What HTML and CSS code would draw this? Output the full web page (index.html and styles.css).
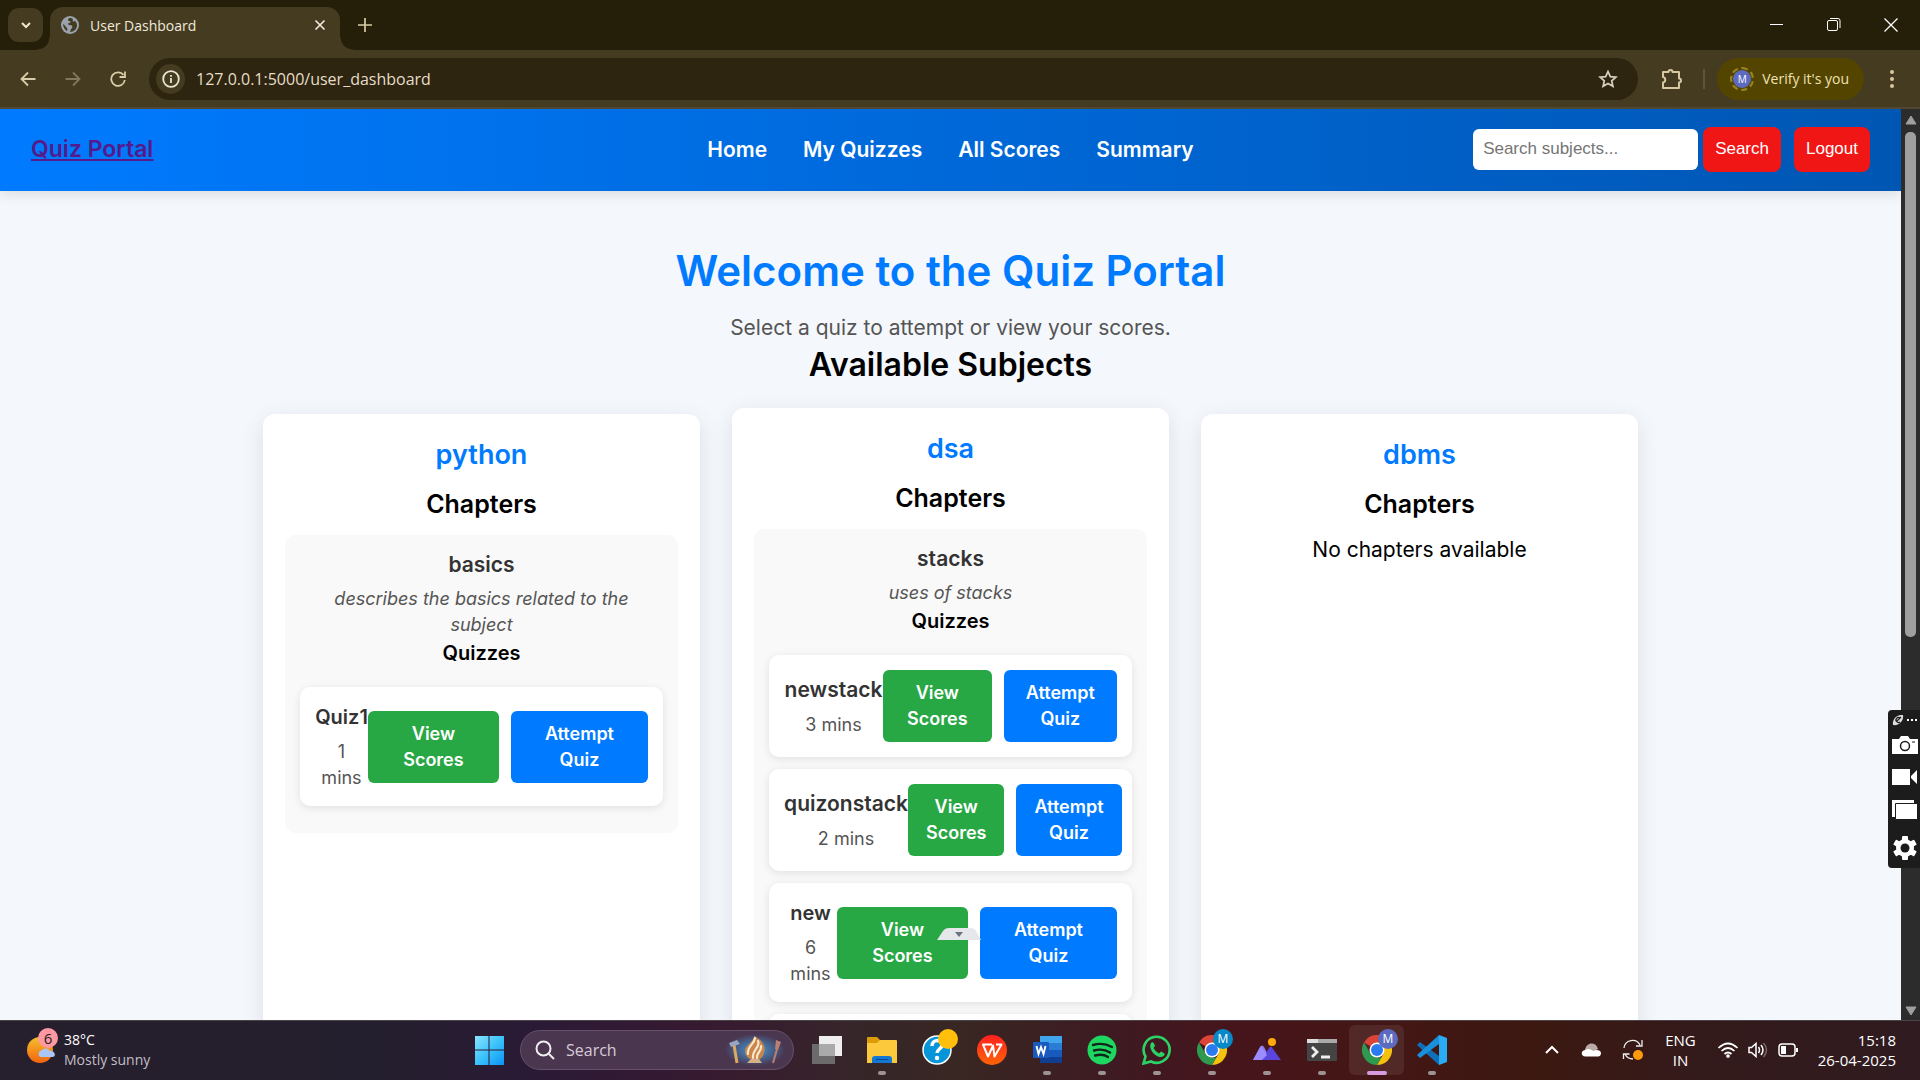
FILE: index.html
```html
<!DOCTYPE html>
<html lang="en">
<head>
  <meta charset="UTF-8" />
  <meta name="viewport" content="width=device-width, initial-scale=1.0" />
  <title>User Dashboard</title>
  <link rel="stylesheet" href="styles.css">
</head>
<body>
  <!-- shared icons -->
  <svg class="defs" width="0" height="0" aria-hidden="true">
    <symbol id="chrome" viewBox="0 0 30 30">
      <path fill="#db4437" d="M15 15 2 7.500A15 15 0 0 1 28 7.500H15z"/>
      <path fill="#f4c20d" d="M15 7.500H28A15 15 0 0 1 15 30l6.500-11.250z"/>
      <path fill="#2e9a4f" d="M2 7.500 8.500 18.750 15 22.500h4.300L15 30A15 15 0 0 1 2 7.500z"/>
      <circle cx="15" cy="15" r="7.500" fill="#fff"/>
      <circle cx="15" cy="15" r="6" fill="#2a7bf0"/>
    </symbol>
  </svg>

  <div class="tabstrip">
    <button class="tab-search" aria-label="Search tabs">
      <svg width="12" height="12" viewBox="0 0 12 12"><path d="M2 4l4 4 4-4" fill="none" stroke="#efe6cd" stroke-width="2"/></svg>
    </button>
    <div class="tab">
      <svg width="18" height="20" viewBox="0 0 18 18"><circle cx="9" cy="9" r="9" fill="#9aa3ad"/><path d="M10 2C7 2 6 4 8 5c2 0 2 2 0 2-2 1-1 2 1 2 3 0 3 3 1 4l-1 3c4 0 7-3 7-7 0-2-1-3-2-4-2 1-3 0-2-2zM2 8c0 3 2 6 4 7 1-2 0-3-1-4s-1-2-3-3z" fill="#443b21"/></svg>
      <span>User Dashboard</span>
      <button class="icon-btn" aria-label="Close tab">
        <svg width="12" height="12" viewBox="0 0 12 12"><path d="M1.500 1.500l9 9M10.500 1.500l-9 9" stroke="#efe9dc" stroke-width="1.700"/></svg>
      </button>
    </div>
    <button class="icon-btn new-tab" aria-label="New tab">
      <svg width="14" height="14" viewBox="0 0 14 14"><path d="M7 0v14M0 7h14" stroke="#d9cda4" stroke-width="1.700"/></svg>
    </button>
    <div class="window-buttons">
      <button class="icon-btn" aria-label="Minimize"><svg width="14" height="14" viewBox="0 0 14 14"><path d="M0 6.500h13" stroke="#fff"/></svg></button>
      <button class="icon-btn" aria-label="Restore"><svg width="14" height="14" viewBox="0 0 14 14" fill="none" stroke="#fff"><rect x=".5" y="2.500" width="10" height="10" rx="1.500"/><path d="M3 .5h8a2 2 0 0 1 2 2V10"/></svg></button>
      <button class="icon-btn" aria-label="Close"><svg width="14" height="14" viewBox="0 0 14 14"><path d="M.5.5l13 13M13.500.5l-13 13" stroke="#fff" stroke-width="1.300"/></svg></button>
    </div>
  </div>

  <div class="toolbar">
    <div class="nav-buttons">
      <button class="icon-btn" aria-label="Back"><svg width="16" height="16" viewBox="0 0 16 16" fill="none" stroke="#d8cda6" stroke-width="1.800"><path d="M15.500 8H2M8 1.500 1.500 8 8 14.500"/></svg></button>
      <button class="icon-btn" aria-label="Forward"><svg width="16" height="16" viewBox="0 0 16 16" fill="none" stroke="#81785d" stroke-width="1.800"><path d="M.5 8H14M8 1.500 14.500 8 8 14.500"/></svg></button>
      <button class="icon-btn" aria-label="Reload"><svg width="16" height="16" viewBox="0 0 16 16" fill="none" stroke="#d8cda6" stroke-width="1.800"><path d="M13.500 4A6.800 6.800 0 1 0 14.800 9M15 .5V6H9.500"/></svg></button>
    </div>
    <div class="address">
      <span class="site-info"><svg width="18" height="18" viewBox="0 0 18 18"><circle cx="9" cy="9" r="7.800" fill="none" stroke="#ece5d2" stroke-width="1.800"/><path d="M9 8v5M9 5v1.700" stroke="#ece5d2" stroke-width="1.800"/></svg></span>
      <input type="text" value="127.0.0.1:5000/user_dashboard" aria-label="Address">
      <button class="icon-btn" aria-label="Bookmark"><svg width="20" height="20" viewBox="0 0 20 20"><path d="M10 2.500l2.300 5.100 5.600.5-4.200 3.700 1.200 5.500L10 14.400l-4.900 2.900 1.200-5.500L2.100 8.100l5.600-.5z" fill="none" stroke="#d9cfc0" stroke-width="1.700"/></svg></button>
    </div>
    <button class="icon-btn extensions" aria-label="Extensions"><svg width="22" height="22" viewBox="0 0 22 22"><path d="M2 4h5.500a2 2 0 0 1 4 0H18v6.500a2 2 0 0 1 0 4V20H2v-5.500a2.800 2.800 0 0 0 0-5.500z" fill="none" stroke="#d8c8a0" stroke-width="2" stroke-linejoin="round"/></svg></button>
    <span class="divider"></span>
    <button class="verify"><span class="avatar">M</span>Verify it's you</button>
    <button class="icon-btn" aria-label="Menu"><svg width="4" height="18" viewBox="0 0 4 18" fill="#d8c8a0"><circle cx="2" cy="2" r="2"/><circle cx="2" cy="9" r="2"/><circle cx="2" cy="16" r="2"/></svg></button>
  </div>

  <div class="viewport">
    <div class="page">
      <header class="navbar">
        <a href="#" class="logo">Quiz Portal</a>
        <nav>
          <a href="#">Home</a>
          <a href="#">My Quizzes</a>
          <a href="#">All Scores</a>
          <a href="#">Summary</a>
        </nav>
        <form class="search-form" onsubmit="return false">
          <input type="text" placeholder="Search subjects..." aria-label="Search subjects">
          <button class="btn-red">Search</button>
          <button type="button" class="btn-red logout">Logout</button>
        </form>
      </header>

      <main>
        <h1>Welcome to the Quiz Portal</h1>
        <p class="intro">Select a quiz to attempt or view your scores.</p>
        <h2>Available Subjects</h2>

        <div class="subjects">
          <section class="subject">
            <h3>python</h3>
            <h4>Chapters</h4>
            <div class="chapter">
              <h5>basics</h5>
              <p class="description">describes the basics related to the subject</p>
              <h6>Quizzes</h6>
              <div class="quiz short">
                <div class="quiz-info"><strong>Quiz1</strong><p>1 mins</p></div>
                <div class="actions"><button class="view">View Scores</button><button class="attempt">Attempt Quiz</button></div>
              </div>
            </div>
          </section>

          <section class="subject hovered">
            <h3>dsa</h3>
            <h4>Chapters</h4>
            <div class="chapter">
              <h5>stacks</h5>
              <p class="description">uses of stacks</p>
              <h6>Quizzes</h6>
              <div class="quiz">
                <div class="quiz-info"><strong>newstack</strong><p>3 mins</p></div>
                <div class="actions"><button class="view">View Scores</button><button class="attempt">Attempt Quiz</button></div>
              </div>
              <div class="quiz long">
                <div class="quiz-info"><strong>quizonstack</strong><p>2 mins</p></div>
                <div class="actions"><button class="view">View Scores</button><button class="attempt">Attempt Quiz</button></div>
              </div>
              <div class="quiz short">
                <div class="quiz-info"><strong>new</strong><p>6 mins</p></div>
                <div class="actions"><button class="view">View Scores</button><button class="attempt">Attempt Quiz</button></div>
              </div>
              <div class="quiz"></div>
            </div>
          </section>

          <section class="subject">
            <h3>dbms</h3>
            <h4>Chapters</h4>
            <p class="empty">No chapters available</p>
          </section>
        </div>
      </main>
    </div>

    <div class="scrollbar">
      <svg width="12" height="10" viewBox="0 0 12 10"><path d="M6 1l5 8H1z" fill="#9f9f9f" stroke="#9f9f9f" stroke-linejoin="round"/></svg>
      <div class="thumb"></div>
      <svg width="12" height="10" viewBox="0 0 12 10"><path d="M6 9l5-8H1z" fill="#9f9f9f" stroke="#9f9f9f" stroke-linejoin="round"/></svg>
    </div>

    <svg class="pull-tab" width="44" height="12" viewBox="0 0 44 12"><path d="M0 12 6 3Q8 0 12 0h21q4 0 6 3l5 9z" fill="#e5e7eb"/><path d="M18 4h8l-4 5z" fill="#6b7280"/></svg>

    <div class="recorder">
      <svg width="26" height="12" viewBox="0 0 26 12"><path d="M1 11C0 6 4 0 11 1c1 6-4 11-10 10z" fill="#ddd"/><path d="M8 4a2.500 2.500 0 1 0 0 4M5 7l4-4" fill="none" stroke="#1c1c1c" stroke-width="1.200"/><path d="M15 5h2v2h-2zM19 5h2v2h-2zM23 5h2v2h-2z" fill="#fff"/></svg>
      <svg width="26" height="18" viewBox="0 0 26 18"><path d="M0 3h7l2-3h7l2 3h8v15H0z" fill="#fff"/><circle cx="13" cy="10" r="4.500" fill="#fff" stroke="#1c1c1c" stroke-width="1.500"/><path d="M20 6h3" stroke="#1c1c1c"/></svg>
      <svg width="26" height="16" viewBox="0 0 26 16" fill="#fff"><path d="M0 0h18v16H0zM19 7l6-6v14l-6-6z"/></svg>
      <svg width="26" height="20" viewBox="0 0 26 20"><path d="M0 0h22v17H0z" fill="#fff"/><path d="M3.500 3.500h22v16h-22z" fill="#fff" stroke="#1c1c1c"/></svg>
      <svg width="26" height="26" viewBox="0 0 26 26"><g fill="#fff"><circle cx="13" cy="13" r="9"/><rect x="10" y="1" width="6" height="24" rx="1"/><rect x="10" y="1" width="6" height="24" rx="1" transform="rotate(60 13 13)"/><rect x="10" y="1" width="6" height="24" rx="1" transform="rotate(120 13 13)"/></g><circle cx="13" cy="13" r="4.500" fill="#1c1c1c"/></svg>
    </div>
  </div>

  <footer class="taskbar">
    <div class="weather">
      <div class="weather-icon">
        <svg width="30" height="30" viewBox="0 0 30 30"><defs><linearGradient id="sun" x1="0" y1="0" x2="0" y2="1"><stop offset="0" stop-color="#f6c02c"/><stop offset="1" stop-color="#f0640f"/></linearGradient></defs><circle cx="13" cy="15" r="13" fill="url(#sun)"/><path d="M13 22a4 4 0 0 1 2-7 5 5 0 0 1 8 1c5-1 7 6 2 6z" fill="#a9c6f5"/></svg>
        <span class="count">6</span>
      </div>
      <div class="weather-text"><span>38°C</span><span class="dim">Mostly sunny</span></div>
    </div>

    <div class="apps">
      <button class="app" aria-label="Start"><svg width="30" height="30" viewBox="0 0 30 30"><defs><linearGradient id="win" x1="0" y1="0" x2="1" y2="1"><stop offset="0" stop-color="#8be3ff"/><stop offset=".5" stop-color="#3cc3fb"/><stop offset="1" stop-color="#0b93f5"/></linearGradient></defs><path fill="url(#win)" d="M1 1h13.500v13.500H1zM15.500 1H30v13.500H15.500zM1 15.500h13.500V30H1zM15.500 15.500H30V30H15.500z"/></svg></button>
      <div class="task-search">
        <svg width="20" height="20" viewBox="0 0 20 20" fill="none" stroke="#eee" stroke-width="2"><circle cx="8.500" cy="8.500" r="7"/><path d="M13.500 13.500l5.500 5.500"/></svg>
        <input type="text" placeholder="Search" aria-label="Search Windows">
        <svg width="60" height="34" viewBox="0 0 60 34">
          <defs><radialGradient id="glow"><stop offset="0" stop-color="#3f9fe0"/><stop offset="1" stop-color="#3f9fe0" stop-opacity="0"/></radialGradient></defs>
          <ellipse cx="30" cy="17" rx="30" ry="16" fill="url(#glow)"/>
          <path d="M9 12l3 18" stroke="#d9ab63" stroke-width="3"/><path d="M4 10l8-3 3 4-9 3z" fill="#9aa6c0"/>
          <path d="M54 9l-6 21" stroke="#b98074" stroke-width="2"/><path d="M51 7l5 2-3 8-3-1z" fill="#b98074"/>
          <path d="M29 3c7 3 13 10 10 17-1 4-3 7-9 7s-10-4-10-9c0-6 9-9 9-15z" fill="#c9864c"/>
          <path d="M30 5c-1 7-8 8-7 16M33 8c3 6-6 8-5 17M36 13c1 5-5 7-4 12" fill="none" stroke="#fae6c8" stroke-width="2.200" stroke-linecap="round"/>
          <path d="M26 26h8l3 4H22z" fill="#d8b088"/>
        </svg>
      </div>
      <button class="app" aria-label="Task view"><svg width="30" height="30" viewBox="0 0 30 30"><path d="M7 1h23v20H7z" fill="#eee"/><path d="M0 9h23v20H0z" fill="#777" fill-opacity=".85"/><path d="M7 9h16v12H7z" fill="#aaa"/></svg></button>
      <button class="app running" aria-label="File Explorer"><svg width="30" height="30" viewBox="0 0 30 30"><path d="M0 3q0-1 1-1h9l3 3v6H0z" fill="#dd9b08"/><path d="M0 8h10l3-3h16q1 0 1 1v22H0z" fill="#fcc93c"/><path d="M5 28v-4q0-3 3-3h14q3 0 3 3v4z" fill="#1477d3"/><path d="M9 24.500h12" stroke="#064a91"/></svg></button>
      <button class="app" aria-label="Help"><svg width="42" height="42" viewBox="0 0 42 42"><circle cx="21" cy="21" r="14" fill="#0795d9" stroke="#fff" stroke-width="1.500"/><path d="M16 17c0-7 10-7 10-1 0 4-5 4-5 8" fill="none" stroke="#fff" stroke-width="3.500"/><circle cx="21" cy="29" r="2.200" fill="#fff"/><circle cx="32" cy="10" r="10" fill="#ffbf0b"/></svg></button>
      <button class="app" aria-label="WPS Office"><svg width="30" height="30" viewBox="0 0 30 30"><defs><linearGradient id="wps" x1="0" y1="0" x2="0" y2="1"><stop offset="0" stop-color="#ff2020"/><stop offset="1" stop-color="#ff6406"/></linearGradient></defs><circle cx="15" cy="15" r="15" fill="url(#wps)"/><path d="M15 9.500H6l5 12 5-11 1.500 11 7-12H19" fill="none" stroke="#fff" stroke-width="2" stroke-linejoin="round"/></svg></button>
      <button class="app running" aria-label="Word"><svg width="30" height="30" viewBox="0 0 30 30"><path d="M8 1h22v7H8z" fill="#41a5ee"/><path d="M8 8h22v7H8z" fill="#2b7cd3"/><path d="M8 15h22v7H8z" fill="#185abd"/><path d="M8 22h22v6H8z" fill="#103f91"/><rect x="1" y="7" width="16" height="16" rx="1" fill="#185abd"/><path d="M4.500 11l2 8L9 12l2.500 7 2-8" fill="none" stroke="#fff" stroke-width="1.900"/></svg></button>
      <button class="app running" aria-label="Spotify"><svg width="30" height="30" viewBox="0 0 30 30"><circle cx="15" cy="15" r="14.500" fill="#1ed760"/><path d="M6 10q10-3 19 2M7 15.500q9-2.500 16 2M8 20.500q8-2 13 1.500" fill="none" stroke="#12251a" stroke-width="2.400" stroke-linecap="round"/></svg></button>
      <button class="app running" aria-label="WhatsApp"><svg width="30" height="30" viewBox="0 0 30 30"><path d="M1.500 28.500l2-7A13 13 0 1 1 9 26.500z" fill="none" stroke="#2bd366" stroke-width="2.600"/><path d="M9 8c2-2 3 0 4 3l-1.500 2q2 4 5.500 5.500l2-2 3.500 2c1 2-3 4-5 3.500C12 21 6 13 9 8z" fill="#2bd366"/></svg></button>
      <button class="app running" aria-label="Chrome"><svg width="30" height="30"><use href="#chrome"/></svg><span class="badge teal">M</span></button>
      <button class="app running" aria-label="Photos"><svg width="30" height="30" viewBox="0 0 30 30"><path d="M1 25 8 12q2-3 4 0l7 13H12l-3-5-3 5z" fill="#8b7cf2"/><path d="M10 25l7-12q2-3 4 1l8 11H18z" fill="#5b46dd"/><path d="M1 25l8-14 6 9-5 5z" fill="#9c8cff"/><circle cx="20" cy="7" r="4" fill="#ffa90a"/></svg></button>
      <button class="app running" aria-label="Terminal"><svg width="30" height="30" viewBox="0 0 30 30"><rect y="4" width="30" height="22" rx="1" fill="#444"/><path d="M0 4h30v4H0z" fill="#aaa"/><path d="M0 4h11v4H0z" fill="#ddd"/><path d="M5 12l5 5-5 5M14 22h9" fill="none" stroke="#eee" stroke-width="2.800"/></svg></button>
      <button class="app running active" aria-label="Chrome window"><svg width="30" height="30"><use href="#chrome"/></svg><span class="badge indigo">M</span></button>
      <button class="app running" aria-label="Visual Studio Code"><svg width="30" height="30" viewBox="0 0 30 30"><path d="M0 10l3-3 19 14v9z" fill="#0f70b7"/><path d="M0 20l3 3L22 9V0z" fill="#1a90dc"/><path d="M22 0l8 3v24l-8 3z" fill="#2aacf4"/></svg></button>
    </div>

    <div class="tray">
      <svg width="16" height="10" viewBox="0 0 16 10"><path d="M2 8l6-6 6 6" fill="none" stroke="#fff" stroke-width="2"/></svg>
      <svg width="20" height="14" viewBox="0 0 20 14"><path d="M4 7C5-1 15-2 17 6l-8 4z" fill="#b9aaa8"/><path d="M5 13.500C0 14-1 8 4 7c3-2 6-1 8 1 3-2 8-1 8 2s-2 3.500-4 3.500z" fill="#fff"/></svg>
      <svg width="22" height="22" viewBox="0 0 22 22"><path d="M2 9A8.500 8.500 0 0 1 18 6M20 1v6h-6M11 20A9 9 0 0 1 3 15M1.500 20v-5h6" fill="none" stroke="#eee" stroke-width="1.300"/><circle cx="16" cy="16" r="5" fill="#ff9a0a"/></svg>
      <div class="lang"><span>ENG</span><span>IN</span></div>
      <svg width="20" height="16" viewBox="0 0 20 16" fill="none" stroke="#fff" stroke-width="1.700"><path d="M.5 6q9.500-9 19 0M3.500 9q6.500-6 13 0M6.500 12q3.500-3 7 0"/><circle cx="10" cy="14" r="1" fill="#fff"/></svg>
      <svg width="20" height="16" viewBox="0 0 20 16" fill="none" stroke="#fff" stroke-width="1.500"><path d="M1 5.500h2.500L8 1.500v13l-4.500-4H1zM10.500 5q2 3 0 6M13 3q4 5 0 10"/><path d="M15.500 1q6 7 0 14" stroke="#7a6563"/></svg>
      <svg width="20" height="14" viewBox="0 0 20 14"><rect x="1" y="1" width="16" height="12" rx="3" fill="none" stroke="#fff" stroke-width="1.500"/><path d="M3 3h5v8H3zM18 5h2v4h-2z" fill="#fff"/></svg>
      <div class="clock"><span>15:18</span><span>26-04-2025</span></div>
    </div>
  </footer>
</body>
</html>
```
FILE: styles.css
```css
* {
  box-sizing: border-box;
  margin: 0;
  padding: 0;
}
body {
  height: 100vh;
  display: flex;
  flex-direction: column;
  overflow: hidden;
  font-family: Inter, sans-serif;
  background: #f4f7fc;
}
button {
  border: none;
  cursor: pointer;
  font: inherit;
}
.defs {
  position: absolute;
}
.icon-btn {
  display: flex;
  align-items: center;
  justify-content: center;
  background: none;
}

/* browser window */
.tabstrip, .toolbar, .taskbar {
  flex: none;
  font-family: "Open Sans", sans-serif;
}
.tabstrip {
  display: flex;
  align-items: center;
  height: 50px;
  padding-left: 8px;
  background: #251e09;
}
.tab-search {
  width: 35px;
  height: 34px;
  display: flex;
  align-items: center;
  justify-content: center;
  border-radius: 11px;
  background: #443b21;
}
.tab {
  position: relative;
  align-self: flex-end;
  display: flex;
  align-items: center;
  gap: 11px;
  width: 290px;
  height: 43px;
  margin-left: 7px;
  padding: 0 14px 7px 11px;
  border-radius: 13px 13px 0 0;
  background: #443b21;
  color: #efe9dc;
  font-size: 14px;
}
.tab::before, .tab::after {
  content: "";
  position: absolute;
  bottom: 0;
  width: 13px;
  height: 13px;
}
.tab::before {
  right: 100%;
  background: radial-gradient(circle at 0 0, transparent 12px, #443b21 13px);
}
.tab::after {
  left: 100%;
  background: radial-gradient(circle at 100% 0, transparent 12px, #443b21 13px);
}
.tab .icon-btn {
  margin-left: auto;
}
.new-tab {
  margin-left: 18px;
}
.window-buttons {
  display: flex;
  gap: 43px;
  margin-left: auto;
  padding-right: 22px;
}
.toolbar {
  display: flex;
  align-items: center;
  height: 59px;
  padding: 0 26px 0 20px;
  border-bottom: 2px solid #504832;
  background: #443b21;
}
.nav-buttons {
  display: flex;
  gap: 29px;
  margin-right: 23px;
}
.address {
  flex: 1;
  display: flex;
  align-items: center;
  height: 42px;
  padding: 0 20px 0 7px;
  border-radius: 21px;
  background: #2d250f;
}
.site-info {
  display: flex;
  align-items: center;
  justify-content: center;
  width: 29px;
  height: 30px;
  border-radius: 50%;
  background: #443b21;
}
.address input {
  flex: 1;
  margin-left: 11px;
  border: none;
  background: none;
  color: #e6dcc8;
  font: 16px "Open Sans", sans-serif;
}
.extensions {
  margin-left: 23px;
}
.divider {
  width: 2px;
  height: 20px;
  margin: 0 12px 0 20px;
  background: #5f5538;
}
.verify {
  display: flex;
  align-items: center;
  gap: 8px;
  height: 42px;
  margin-right: 26px;
  padding: 0 15px 0 13px;
  border-radius: 21px;
  background: #534500;
  color: #efe2b4;
  font-size: 14px;
}
.avatar {
  width: 24px;
  height: 24px;
  border: 2px dashed #9a8420;
  border-radius: 50%;
  background: #5c6bc0;
  background-clip: content-box;
  padding: 1px;
  font-size: 10px;
  line-height: 18px;
  color: #fff;
}

/* page */
.viewport {
  position: relative;
  flex: 1;
  min-height: 0;
  display: flex;
}
.page {
  flex: 1;
  display: flex;
  flex-direction: column;
  overflow: hidden;
}
.navbar {
  flex: none;
  display: grid;
  grid-template-columns: 1fr auto 1fr;
  align-items: center;
  height: 82px;
  padding: 0 31px 2px;
  background: linear-gradient(90deg, #007bff, #0056b3);
  box-shadow: 0 4px 12px rgba(0, 0, 0, 0.1);
}
.logo {
  justify-self: start;
  font-size: 23px;
  font-weight: 600;
  color: #551a8b;
}
nav {
  display: flex;
  gap: 36px;
}
nav a {
  color: #fff;
  font-size: 21px;
  font-weight: 600;
  text-decoration: none;
}
.search-form {
  display: flex;
  align-items: center;
  justify-self: end;
  font-family: "Liberation Sans", sans-serif;
  font-size: 17px;
}
.search-form input {
  width: 225px;
  height: 41px;
  margin-right: 5px;
  padding: 0 10px;
  border: none;
  border-radius: 6px;
  font: inherit;
}
.search-form input::placeholder {
  color: #757575;
}
.btn-red {
  height: 45px;
  padding: 0 12px;
  border-radius: 8px;
  background: #f01616;
  color: #fff;
}
.logout {
  margin-left: 13px;
}
main {
  flex: none;
  padding: 50px 24px;
  text-align: center;
}
h1 {
  margin-bottom: 12px;
  font-size: 42px;
  font-weight: 600;
  line-height: 60px;
  color: #007bff;
}
.intro {
  font-size: 21px;
  line-height: 30px;
  color: #555;
}
h2 {
  margin-bottom: 27px;
  font-size: 32px;
  font-weight: 600;
  line-height: 44px;
}
.subjects {
  display: grid;
  grid-template-columns: repeat(3, 1fr);
  gap: 32px;
  max-width: 1375px;
  margin: 0 auto;
}
.subject {
  min-width: 0;
  padding: 22px;
  border-radius: 12px;
  background: #fff;
  box-shadow: 0 6px 22px rgba(0, 0, 0, 0.1);
}
.subject.hovered {
  transform: translateY(-6px);
}
h3, h4 {
  margin-bottom: 12px;
  font-weight: 600;
}
h3 {
  font-size: 27px;
  line-height: 38px;
  color: #007bff;
}
h4 {
  font-size: 25px;
  line-height: 37px;
}
.chapter {
  padding: 15px;
  border-radius: 10px;
  background: #f9f9f9;
}
h5, h6, .quiz-info strong {
  font-size: 21px;
  font-weight: 600;
  line-height: 30px;
}
h5 {
  margin-bottom: 6px;
  color: #333;
}
h6 {
  margin-bottom: 19px;
  font-size: 20px;
}
.description {
  padding: 0 15px;
  font-size: 18px;
  font-style: italic;
  line-height: 26px;
  color: #555;
}
.empty {
  font-size: 21px;
  line-height: 30px;
}
.quiz {
  display: flex;
  align-items: center;
  min-height: 102px;
  margin-bottom: 12px;
  padding: 15px;
  border-radius: 10px;
  background: #fff;
  box-shadow: 0 2px 8px rgba(0, 0, 0, 0.1);
}
.quiz-info {
  flex: none;
  width: 99px;
}
.short .quiz-info {
  width: 53px;
}
.long .quiz-info {
  width: 124px;
}
.quiz-info strong {
  display: block;
  color: #333;
}
.short strong {
  font-size: 20px;
}
.quiz-info p {
  margin-top: 7px;
  padding: 0 4px;
  font-size: 18px;
  line-height: 26px;
  color: #555;
}
.actions {
  flex: 1;
  display: flex;
  gap: 12px;
}
.actions button {
  flex: 107;
  padding: 10px 18px;
  border-radius: 6px;
  background: #28a745;
  color: #fff;
  font-size: 18px;
  font-weight: 600;
  line-height: 26px;
}
.actions .attempt {
  flex: 114;
  background: #007bff;
}
.scrollbar {
  display: flex;
  flex-direction: column;
  align-items: center;
  gap: 7px;
  width: 19px;
  padding: 6px 0 4px;
  background: #2c2c2c;
}
.thumb {
  width: 11px;
  height: 56%;
  margin-bottom: auto;
  border-radius: 5px;
  background: #9f9f9f;
}
.pull-tab {
  position: absolute;
  left: 937px;
  bottom: 80px;
}
.recorder {
  position: absolute;
  right: 0;
  bottom: 152px;
  display: flex;
  flex-direction: column;
  align-items: center;
  gap: 15px;
  width: 32px;
  height: 158px;
  padding: 4px 2px 0 3px;
  border-radius: 4px 0 0 4px;
  background: #1c1c1c;
}
.recorder svg {
  flex: none;
}
.recorder svg:first-child {
  margin-bottom: -5px;
}

/* taskbar */
.taskbar {
  display: grid;
  grid-template-columns: 1fr auto 1fr;
  align-items: center;
  height: 60px;
  padding-bottom: 2px;
  border-top: 1px solid #4a4348;
  background: linear-gradient(90deg, #261f2d, #241f2e 20%, #2b1a36 28%, #371a30 37%, #36252a 44%, #382722 50%, #3e1a22 58%, #46151c 64%, #451616 70%, #3c1811 80%, #341a1a 88%, #2f1b20);
  color: #fff;
  font-size: 15px;
  line-height: 20px;
}
.weather {
  display: flex;
  align-items: center;
  gap: 7px;
  padding-left: 27px;
}
.weather-icon {
  position: relative;
  width: 30px;
  height: 30px;
}
.count {
  position: absolute;
  top: -7px;
  left: 11px;
  width: 20px;
  border-radius: 50%;
  background: #ff98a0;
  color: #222;
  text-align: center;
}
.weather-text, .lang, .clock {
  display: flex;
  flex-direction: column;
}
.weather-text {
  font-size: 14px;
}
.dim {
  color: #c3bec6;
}
.apps {
  display: flex;
  align-items: center;
}
.app {
  position: relative;
  display: flex;
  align-items: center;
  justify-content: center;
  width: 55px;
  height: 50px;
  border-radius: 6px;
  background: none;
}
.running::after {
  content: "";
  position: absolute;
  bottom: 0;
  width: 8px;
  height: 4px;
  border-radius: 2px;
  background: #9d9393;
}
.active {
  background: rgba(255, 255, 255, 0.08);
}
.active::after {
  width: 20px;
  background: #d99be0;
}
.badge {
  position: absolute;
  top: 4px;
  right: 6px;
  width: 20px;
  border-radius: 50%;
  color: #fff;
  font-size: 12px;
}
.teal {
  background: #0788c8;
}
.indigo {
  background: #5c6bc0;
}
.task-search {
  display: flex;
  align-items: center;
  width: 274px;
  height: 40px;
  margin: 0 5px 0 4px;
  padding: 0 8px 0 14px;
  border: 1px solid #66506a;
  border-radius: 20px;
  background: #4b3650;
}
.task-search input {
  flex: 1;
  min-width: 0;
  margin-left: 11px;
  border: none;
  background: none;
  font: 16px "Open Sans", sans-serif;
}
.task-search input::placeholder {
  color: #d5ccd6;
}
.tray {
  display: flex;
  align-items: center;
  justify-content: flex-end;
  gap: 10px;
  padding-right: 24px;
}
.tray svg:nth-child(-n+3) {
  margin-right: 11px;
}
.lang {
  margin-right: 12px;
  text-align: center;
}
.clock {
  margin-left: 10px;
  text-align: right;
}
```
